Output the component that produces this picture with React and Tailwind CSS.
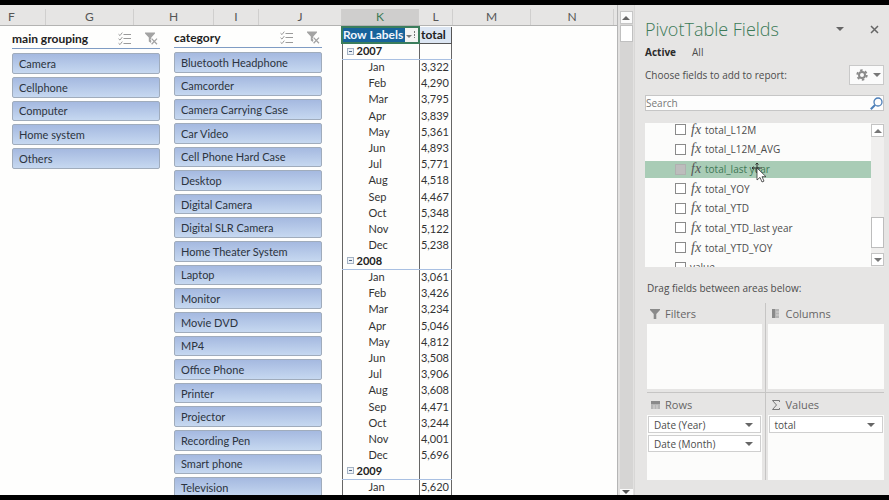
const COLUMNS = [
  { name: "F", width: "w-[46px] pl-2 justify-start" },
  { name: "G", width: "w-[88px] justify-center" },
  { name: "H", width: "w-[80px] justify-center" },
  { name: "I", width: "w-[45px] justify-center" },
  { name: "J", width: "w-[83px] justify-center" },
  { name: "K", width: "w-[77px] justify-center bg-[#cfcecd] text-[#3c7a55]" },
  { name: "L", width: "w-[34px] justify-center" },
  { name: "M", width: "w-[78px] justify-center" },
  { name: "N", width: "w-[83px] justify-center" },
];

const GROUPS = ["Camera", "Cellphone", "Computer", "Home system", "Others"];

const CATEGORIES = [
  "Bluetooth Headphone",
  "Camcorder",
  "Camera Carrying Case",
  "Car Video",
  "Cell Phone Hard Case",
  "Desktop",
  "Digital Camera",
  "Digital SLR Camera",
  "Home Theater System",
  "Laptop",
  "Monitor",
  "Movie DVD",
  "MP4",
  "Office Phone",
  "Printer",
  "Projector",
  "Recording Pen",
  "Smart phone",
  "Television",
];

const MONTHS = ["Jan", "Feb", "Mar", "Apr", "May", "Jun", "Jul", "Aug", "Sep", "Oct", "Nov", "Dec"];

const YEARS = [
  {
    year: "2007",
    totals: ["3,322", "4,290", "3,795", "3,839", "5,361", "4,893", "5,771", "4,518", "4,467", "5,348", "5,122", "5,238"],
  },
  {
    year: "2008",
    totals: ["3,061", "3,426", "3,234", "5,046", "4,812", "3,508", "3,906", "3,608", "4,471", "3,244", "4,001", "5,696"],
  },
  { year: "2009", totals: ["5,620"] },
];

const FIELDS = [
  "total_L12M",
  "total_L12M_AVG",
  "total_last year",
  "total_YOY",
  "total_YTD",
  "total_YTD_last year",
  "total_YTD_YOY",
];

function Caret({ up = false, className = "" }) {
  return (
    <svg viewBox="0 0 8 4" className={`h-1 w-2 shrink-0 ${className}`} fill="currentColor" aria-hidden="true">
      <path d={up ? "M0 4 4 0l4 4z" : "M0 0h8L4 4z"} />
    </svg>
  );
}

function MultiSelectIcon() {
  return (
    <svg viewBox="0 0 13 13" className="h-[13px] w-[13px]" fill="none" stroke="#9a9a9a" aria-hidden="true">
      <path d="M.5 2.2 2 3.6 4.3.6M.5 6.7 2 8.1l2.3-3M.5 11.2 2 12.6l2.3-3" strokeWidth="1" />
      <path d="M5.5 2.5H13M5.5 6.5H13M5.5 11.5H13" strokeWidth="1" />
    </svg>
  );
}

function ClearFilterIcon() {
  return (
    <svg viewBox="0 0 13 13" className="h-[13px] w-[13px]" aria-hidden="true">
      <path d="M0 .5h10v1L6.3 5.4v5.8L3.8 9.4v-4L0 1.5z" fill="#a3a3a3" />
      <path d="m6.4 6.4 5.8 5.8m0-5.8-5.8 5.8" stroke="#fff" strokeWidth="3" />
      <path d="m6.6 6.6 5.4 5.6m0-5.6-5.4 5.6" stroke="#a3a3a3" strokeWidth="1.3" />
    </svg>
  );
}

function Slicer({ title, items, listClass }) {
  return (
    <section className="w-[148px] shrink-0">
      <header className="flex h-5 items-center border-b border-[#7f9cc4]">
        <h2 className="flex-1 text-[12px] font-bold text-[#222]">{title}</h2>
        <button type="button" aria-label="Multi-select" className="mr-[14px]">
          <MultiSelectIcon />
        </button>
        <button type="button" aria-label="Clear filter" className="mr-[2px]">
          <ClearFilterIcon />
        </button>
      </header>
      <div className={`mt-1 flex flex-col gap-[3px] ${listClass}`}>
        {items.map((item) => (
          <button
            key={item}
            type="button"
            className="min-h-0 flex-1 rounded-[2px] border border-[#a0acbc] bg-linear-to-b from-[#a5b9e0] to-[#c6d8f0] px-[6px] text-left text-[11px] leading-none text-[#2c3440]"
          >
            {item}
          </button>
        ))}
      </div>
    </section>
  );
}

function PivotTable() {
  return (
    <table className="w-[111px] shrink-0 table-fixed border-collapse text-[11px] leading-[14px] text-[#333]">
      <thead>
        <tr className="h-4 text-[12px] font-bold">
          <th className="w-[77px] border-2 border-[#3b7d5c] p-0 text-left">
            <div className="flex h-[14px] items-center bg-[#17639b] text-[#f1f6fb]">
              <span className="flex-1 whitespace-nowrap">Row Labels</span>
              <button
                type="button"
                aria-label="Sort and filter"
                className="flex h-[14px] w-[13px] items-center justify-center bg-[#f3f3f3] text-[#777]"
              >
                <svg viewBox="0 0 11 9" className="h-[9px] w-[11px]" aria-hidden="true">
                  <path d="M0 4h6L3 7z" fill="currentColor" />
                  <path d="M8.5 0v2m0 1v2m0 1v1" stroke="currentColor" fill="none" />
                </svg>
              </button>
            </div>
          </th>
          <th className="border-r border-b border-[#555] bg-[#dce6f3] p-0 pl-px text-left text-[#222]">total</th>
        </tr>
      </thead>
      {YEARS.map(({ year, totals }) => (
        <tbody key={year}>
          <tr className="h-4 font-bold text-[#222]">
            <th className="border-x border-b border-x-[#666] border-b-[#a9c0e2] p-0 text-left">
              <div className="flex items-center gap-[3px] pl-1">
                <button
                  type="button"
                  aria-label={`Collapse ${year}`}
                  className="flex h-[7px] w-[7px] items-center justify-center border border-[#a5b3c4] bg-[#eef2f7]"
                >
                  <span className="h-px w-[3px] bg-[#4a6484]" />
                </button>
                {year}
              </div>
            </th>
            <td className="border-x border-b border-x-[#666] border-b-[#a9c0e2] p-0" />
          </tr>
          {totals.map((total, i) => (
            <tr key={MONTHS[i]} className="h-4 nth-[5n]:h-[17px]">
              <th className="border-x border-[#666] p-0 pl-[26px] text-left font-normal">{MONTHS[i]}</th>
              <td className="border-x border-[#666] p-0 pr-[2px] text-right">{total}</td>
            </tr>
          ))}
        </tbody>
      ))}
    </table>
  );
}

function Sheet() {
  return (
    <main className="flex min-w-0 flex-1 flex-col overflow-hidden border-r border-[#b5b5b5] bg-[#fefefd]">
      <div className="flex h-[21px] shrink-0 items-end border-b border-[#b3b3b2] bg-[#e6e5e4] text-[12px] text-[#555]">
        {COLUMNS.map(({ name, width }) => (
          <div key={name} className={`flex h-4 shrink-0 items-center border-r border-[#d0cfce] ${width}`}>
            {name}
          </div>
        ))}
      </div>
      <div className="flex min-h-0 flex-1 items-start pl-3">
        <div className="mr-[14px] pt-[3px]">
          <Slicer title="main grouping" items={GROUPS} listClass="h-[116px]" />
        </div>
        <div className="mr-[19px] pt-[2px]">
          <Slicer title="category" items={CATEGORIES} listClass="h-[446px]" />
        </div>
        <PivotTable />
      </div>
    </main>
  );
}

function SheetScrollbar() {
  return (
    <div className="flex w-4 shrink-0 flex-col items-center bg-[#e2e1e0] pt-[6px]">
      <button
        type="button"
        aria-label="Scroll up"
        className="flex h-[13px] w-[13px] items-center justify-center border border-[#c6c6c6] bg-[#fbfbfb] text-[#666]"
      >
        <Caret up />
      </button>
      <div className="w-[13px] flex-1 bg-[#d6d5d4] pt-px">
        <div className="h-[17px] border border-[#c0c0c0] bg-white" />
      </div>
      <button
        type="button"
        aria-label="Scroll down"
        className="flex h-[6px] w-[13px] items-center justify-center bg-[#fbfbfb] text-[#555]"
      >
        <Caret />
      </button>
    </div>
  );
}

function PointerIcon() {
  return (
    <svg viewBox="0 0 16 20" className="absolute top-[2px] left-[76px] h-5 w-4" aria-hidden="true">
      <path d="M6 0v10M1 5h10" stroke="#333" strokeWidth="1" />
      <path d="m4.5 1.5 1.5-1.5 1.5 1.5M2.5 3.5 1 5l1.5 1.5" stroke="#333" fill="none" />
      <path d="M6 5v12l3-2.6 2 4.6 2-.9-2-4.4h4z" fill="#fff" stroke="#333" strokeWidth=".8" />
    </svg>
  );
}

function FieldRow({ name, active = false, formula = true }) {
  return (
    <li className="flex min-h-0 flex-1 items-center">
      <label className={`relative flex h-[17px] flex-1 items-center pl-[30px] ${active ? "bg-[#a9ccb6]" : ""}`}>
        <input
          type="checkbox"
          className={`h-[11px] w-[11px] appearance-none border ${
            active ? "border-[#b0b0b0] bg-[#bdbdbd]" : "border-[#8a8a8a] bg-white"
          }`}
        />
        {formula && (
          <i className="ml-[5px] w-[14px] font-['Liberation_Serif'] text-[14px] leading-none text-[#555]">fx</i>
        )}
        <span className={`text-[10px] leading-4 ${active ? "text-[#3f7655]" : "text-[#4c4c4c]"} ${formula ? "" : "ml-1"}`}>
          {name}
        </span>
        {active && (
          <span className="absolute top-0 left-[30px]">
            <PointerIcon />
          </span>
        )}
      </label>
    </li>
  );
}

function FieldList() {
  return (
    <div className="flex h-36 overflow-hidden bg-[#fcfcfb]">
      <ul className="-mt-[3px] flex h-[157px] flex-1 flex-col self-start">
        {FIELDS.map((name) => (
          <FieldRow key={name} name={name} active={name === "total_last year"} />
        ))}
        <FieldRow name="value" formula={false} />
      </ul>
      <div className="flex w-[13px] flex-col bg-[#f0efee] py-px">
        <button
          type="button"
          aria-label="Scroll fields up"
          className="flex h-[13px] items-center justify-center border border-[#c4c4c4] bg-white text-[#777]"
        >
          <Caret up />
        </button>
        <div className="flex flex-1 flex-col justify-end pb-[5px]">
          <div className="h-[31px] border border-[#bdbdbd] bg-white" />
        </div>
        <button
          type="button"
          aria-label="Scroll fields down"
          className="flex h-[13px] items-center justify-center border border-[#c4c4c4] bg-white text-[#777]"
        >
          <Caret />
        </button>
      </div>
    </div>
  );
}

const AREA_ICONS = {
  Filters: <path d="M0 1h10v1L6.3 6v5H3.7V6L0 2z" fill="#8a8a8a" />,
  Columns: (
    <>
      <path d="M1 1h3v9H1z" fill="#8a8a8a" />
      <path d="M4 1h4v9H4z" fill="#b5b5b5" />
      <path d="M5 4h3M5 7h3" stroke="#d6d5d4" />
    </>
  ),
  Rows: (
    <>
      <path d="M1 2h9v3H1z" fill="#8a8a8a" />
      <path d="M1 5h9v5H1z" fill="#b5b5b5" />
      <path d="M4 6v4M7 6v4" stroke="#d6d5d4" />
    </>
  ),
  Values: <path d="M8.5 3V1.5h-7L5.5 6l-4 4.5h7V9" stroke="#777" fill="none" />,
};

function Area({ title, items = [], className = "" }) {
  return (
    <section className={className}>
      <h3 className="flex h-[21px] items-center gap-1 pt-px pl-[3px] text-[11px] text-[#666]">
        <svg viewBox="0 0 11 12" className="h-3 w-[11px]" aria-hidden="true">
          {AREA_ICONS[title]}
        </svg>
        {title}
      </h3>
      <div className="flex h-[65px] flex-col gap-[2px] bg-[#fcfcfb] px-px pt-px">
        {items.map((item) => (
          <button
            key={item}
            type="button"
            className="flex h-[17px] items-center justify-between border border-[#cfcfcf] bg-white pr-[7px] pl-[5px] text-[10px] leading-none text-[#4c4c4c]"
          >
            {item}
            <Caret className="text-[#666]" />
          </button>
        ))}
      </div>
    </section>
  );
}

function FieldsPane() {
  return (
    <aside className="flex w-[255px] shrink-0 flex-col border-l border-[#d8d7d6] bg-[#e6e5e4] pr-[5px] pl-[10px] font-['Open_Sans',sans-serif] text-[10px] text-[#4c4c4c]">
      <header className="mt-3 flex h-6 items-center">
        <h1 className="flex-1 text-[18px] font-light text-[#3b7a57]">PivotTable Fields</h1>
        <button type="button" aria-label="Pane options" className="mr-[26px] text-[#666]">
          <Caret />
        </button>
        <button type="button" aria-label="Close pane" className="mr-[5px] text-[#666]">
          <svg viewBox="0 0 9 9" className="h-[9px] w-[9px]" aria-hidden="true">
            <path d="m1 1 7 7m0-7L1 8" stroke="currentColor" strokeWidth="1.5" />
          </svg>
        </button>
      </header>
      <nav className="mt-[3px] flex h-4 items-center gap-4">
        <button type="button" className="font-bold text-[#2b2b2b]">
          Active
        </button>
        <button type="button">All</button>
      </nav>
      <div className="mt-[5px] flex h-5 items-center justify-between">
        <span>Choose fields to add to report:</span>
        <button
          type="button"
          aria-label="Tools"
          className="flex h-5 w-[35px] items-center justify-between border border-[#c9c9c9] bg-[#fbfbfb] pr-[2px] pl-[6px]"
        >
          <svg viewBox="0 0 12 12" className="h-3 w-3" fill="none" stroke="#8a8a8a" aria-hidden="true">
            <circle cx="6" cy="6" r="3" strokeWidth="2" />
            <circle cx="6" cy="6" r="4.8" strokeWidth="1.8" strokeDasharray="2.5 2.53" />
          </svg>
          <Caret className="text-[#777]" />
        </button>
      </div>
      <div className="mt-[10px] flex h-4 items-center border border-[#c6c6c6] bg-[#fdfdfd]">
        <input
          type="text"
          aria-label="Search fields"
          placeholder="Search"
          className="min-w-0 flex-1 bg-transparent text-[10px] leading-[14px] outline-none placeholder:text-[#777]"
        />
        <svg viewBox="0 0 13 13" className="h-[13px] w-[13px]" fill="none" stroke="#4d7fb8" aria-hidden="true">
          <circle cx="8" cy="5" r="4" strokeWidth="1.3" />
          <path d="M5 8 .8 12.2" strokeWidth="2" />
        </svg>
      </div>
      <div className="mt-3">
        <FieldList />
      </div>
      <p className="mt-[13px] pl-[2px] leading-4">Drag fields between areas below:</p>
      <div className="mt-[7px] grid grid-cols-2 pl-[2px]">
        <Area title="Filters" className="border-r border-b border-[#c6c5c4] pr-[3px] pb-[3px]" />
        <Area title="Columns" className="border-b border-[#c6c5c4] pb-[3px] pl-[2px]" />
        <Area title="Rows" items={["Date (Year)", "Date (Month)"]} className="border-r border-[#c6c5c4] pt-px pr-[3px]" />
        <Area title="Values" items={["total"]} className="pt-px pl-[2px]" />
      </div>
    </aside>
  );
}

export default function App() {
  return (
    <div className="flex h-screen overflow-hidden border-y-[5px] border-black bg-[#e6e5e4] font-['Lato',sans-serif]">
      <Sheet />
      <SheetScrollbar />
      <FieldsPane />
    </div>
  );
}
